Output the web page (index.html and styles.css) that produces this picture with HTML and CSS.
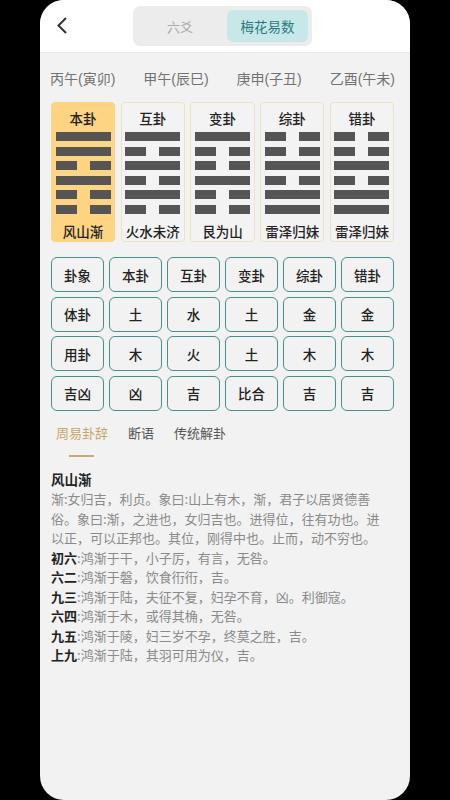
FILE: index.html
```html
<!DOCTYPE html>
<html lang="zh">
<head>
<meta charset="utf-8">
<link rel="stylesheet" href="styles.css">
</head>
<body>
<div class="screen">
  <div class="topbar">
    <svg class="back" width="12" height="17" viewBox="0 0 12 17"><polyline points="10,1 2.5,8.5 10,16" fill="none" stroke="#333" stroke-width="2"/></svg>
    <div class="seg">
      <div class="seg-item">六爻</div>
      <div class="seg-item active">梅花易数</div>
    </div>
  </div>

  <div class="dates">
    <span>丙午(寅卯)</span>
    <span>甲午(辰巳)</span>
    <span>庚申(子丑)</span>
    <span>乙酉(午未)</span>
  </div>

  <div class="cards">
    <div class="card main">
      <div class="c-title">本卦</div>
      <div class="lines">
        <i class="y"></i><i class="y"></i><i class="n"></i><i class="y"></i><i class="n"></i><i class="n"></i>
      </div>
      <div class="c-name">风山渐</div>
    </div>
    <div class="card">
      <div class="c-title">互卦</div>
      <div class="lines">
        <i class="y"></i><i class="n"></i><i class="y"></i><i class="n"></i><i class="y"></i><i class="n"></i>
      </div>
      <div class="c-name">火水未济</div>
    </div>
    <div class="card">
      <div class="c-title">变卦</div>
      <div class="lines">
        <i class="y"></i><i class="n"></i><i class="n"></i><i class="y"></i><i class="n"></i><i class="n"></i>
      </div>
      <div class="c-name">艮为山</div>
    </div>
    <div class="card">
      <div class="c-title">综卦</div>
      <div class="lines">
        <i class="n"></i><i class="n"></i><i class="y"></i><i class="n"></i><i class="y"></i><i class="y"></i>
      </div>
      <div class="c-name">雷泽归妹</div>
    </div>
    <div class="card">
      <div class="c-title">错卦</div>
      <div class="lines">
        <i class="n"></i><i class="n"></i><i class="y"></i><i class="n"></i><i class="y"></i><i class="y"></i>
      </div>
      <div class="c-name">雷泽归妹</div>
    </div>
  </div>

  <div class="table">
    <div class="cell">卦象</div><div class="cell">本卦</div><div class="cell">互卦</div><div class="cell">变卦</div><div class="cell">综卦</div><div class="cell">错卦</div>
    <div class="cell">体卦</div><div class="cell">土</div><div class="cell">水</div><div class="cell">土</div><div class="cell">金</div><div class="cell">金</div>
    <div class="cell">用卦</div><div class="cell">木</div><div class="cell">火</div><div class="cell">土</div><div class="cell">木</div><div class="cell">木</div>
    <div class="cell">吉凶</div><div class="cell">凶</div><div class="cell">吉</div><div class="cell">比合</div><div class="cell">吉</div><div class="cell">吉</div>
  </div>

  <div class="tabs">
    <div class="tab active">周易卦辞</div>
    <div class="tab">断语</div>
    <div class="tab">传统解卦</div>
  </div>

  <div class="text">
    <div class="t-title">风山渐</div>
    <p class="body">渐:女归吉，利贞。象曰:山上有木，渐，君子以居贤德善俗。象曰:渐，之进也，女归吉也。进得位，往有功也。进以正，可以正邦也。其位，刚得中也。止而，动不穷也。</p>
    <p class="body"><b>初六</b>:鸿渐于干，小子厉，有言，无咎。</p>
    <p class="body"><b>六二</b>:鸿渐于磐，饮食衎衎，吉。</p>
    <p class="body"><b>九三</b>:鸿渐于陆，夫征不复，妇孕不育，凶。利御寇。</p>
    <p class="body"><b>六四</b>:鸿渐于木，或得其桷，无咎。</p>
    <p class="body"><b>九五</b>:鸿渐于陵，妇三岁不孕，终莫之胜，吉。</p>
    <p class="body"><b>上九</b>:鸿渐于陆，其羽可用为仪，吉。</p>
  </div>
</div>
</body>
</html>
```

FILE: styles.css
```css
* { box-sizing: border-box; }
html, body {
  margin: 0;
  padding: 0;
  background: #000;
  width: 450px;
  height: 800px;
  overflow: hidden;
}
body {
  font-family: "Noto Sans CJK SC", "Noto Sans", sans-serif;
}
.screen {
  margin: 0 40px;
  width: 370px;
  height: 800px;
  background: #f2f2f2;
  border-radius: 24px;
  overflow: hidden;
}
.topbar {
  height: 53px;
  background: #fff;
  display: flex;
  align-items: center;
  padding-left: 16px;
  border-bottom: 1px solid #e9e9e9;
}
.back {
  display: block;
  margin-top: -2px;
}
.seg {
  margin-left: 65px;
  width: 179px;
  height: 40px;
  background: #ececec;
  border-radius: 7px;
  display: flex;
  align-items: center;
  padding: 4px;
  gap: 4px;
}
.seg-item {
  width: 86px;
  height: 32px;
  display: flex;
  align-items: center;
  justify-content: center;
  font-size: 13px;
  color: #aaa;
  border-radius: 6px;
}
.seg-item.active {
  width: 81px;
  background: #c7e7e9;
  color: #2a7b80;
  font-size: 13.5px;
}
.dates {
  display: flex;
  justify-content: space-between;
  padding: 16px 15px 0 10px;
  font-family: "Liberation Sans", "Noto Sans CJK SC", sans-serif;
  font-size: 14px;
  line-height: 20px;
  color: #727272;
  height: 49px;
}
.cards {
  display: grid;
  grid-template-columns: repeat(5, 1fr);
  gap: 5.5px;
  padding: 0 16px 0 11px;
}
.card {
  height: 140px;
  background: #f3f3f3;
  border: 1px solid #efe2c4;
  border-radius: 4px;
  display: flex;
  flex-direction: column;
  align-items: center;
  padding-top: 5px;
}
.card.main {
  background: #fcd482;
  border-color: #fcd482;
}
.c-title, .c-name {
  font-size: 13.5px;
  line-height: 20px;
  color: #222;
  font-weight: 500;
}
.lines {
  margin-top: 4px;
  width: 55px;
  display: flex;
  flex-direction: column;
  gap: 5.5px;
}
.lines i {
  display: block;
  height: 9px;
}
.lines .y {
  background: #555;
}
.lines .n {
  background: linear-gradient(to right, #555 0 21px, transparent 21px 34px, #555 34px);
}
.c-name {
  margin-top: 7px;
}
.table {
  margin-top: 15px;
  padding: 0 16px 0 11px;
  display: grid;
  grid-template-columns: repeat(6, 1fr);
  grid-auto-rows: 35px;
  column-gap: 5px;
  row-gap: 4.5px;
}
.cell {
  border: 1.5px solid #44908f;
  border-radius: 6px;
  display: flex;
  align-items: center;
  justify-content: center;
  font-size: 13.5px;
  color: #222;
  font-weight: 500;
}
.tabs {
  margin-top: 12px;
  padding-left: 16px;
  display: flex;
  gap: 20px;
}
.tab {
  font-size: 13px;
  line-height: 20px;
  color: #555;
  position: relative;
  height: 35px;
}
.tab.active {
  color: #c5a56a;
}
.tab.active::after {
  content: "";
  position: absolute;
  left: 13px;
  width: 25px;
  top: 32px;
  height: 2px;
  background: #c8aa72;
}
.text {
  padding: 12px 20px 0 11px;
}
.t-title {
  font-size: 13.5px;
  font-weight: 700;
  color: #222;
  line-height: 19.5px;
}
.body {
  margin: 0;
  font-size: 13px;
  line-height: 19.5px;
  color: #8a8a8a;
}
.body b {
  color: #222;
  font-weight: 700;
}
```
